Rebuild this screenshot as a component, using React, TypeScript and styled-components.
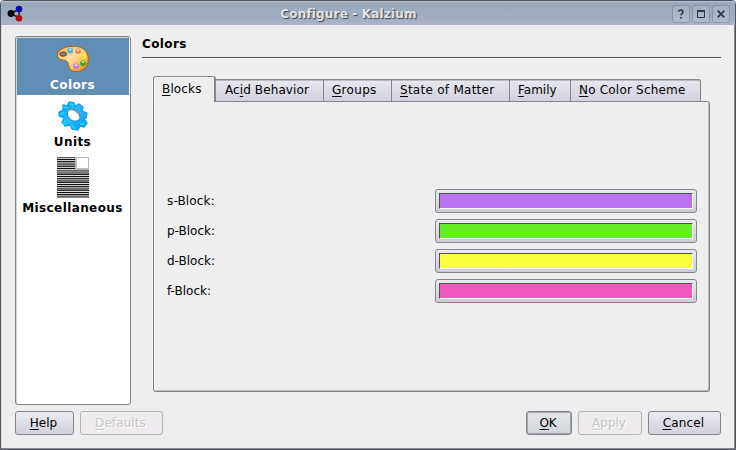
import React from "react";
import styled, { createGlobalStyle } from "styled-components";

const GlobalStyle = createGlobalStyle`
  * { box-sizing: border-box; }
  body { margin: 0; background: #fff; overflow: hidden; }
`;

const Window = styled.main`
  width: 736px;
  height: 450px;
  display: flex;
  flex-direction: column;
  overflow: hidden;
  background: #eeeeee;
  border: 1px solid #50545f;
  border-radius: 4px 4px 0 0;
  box-shadow: inset -1px -1px 0 #858990, inset 1px 0 0 #dcdcda;
  font: 12px/16px "DejaVu Sans", sans-serif;
  color: #000;
`;

const TitleBar = styled.header`
  height: 24px;
  flex: none;
  display: flex;
  align-items: center;
  padding: 1px 5px 0 6px;
  background: linear-gradient(#b9c2d1 0, #9ba8bc 2px, #9dabbe 9px, #a0aec0 17px, #acb5c7 24px);
`;

const Title = styled.h1`
  flex: 1;
  margin: 0;
  padding: 0 0 0 1px;
  text-align: center;
  font-size: 12px;
  line-height: 16px;
  letter-spacing: 0.17px;
  color: #e2e3e4;
  text-shadow: 1px 1px 1px #3f444d;
`;

const WindowButtons = styled.div`
  display: flex;
  gap: 2px;
`;

const WindowButton = styled.button`
  width: 18px;
  height: 18px;
  padding: 0;
  display: grid;
  place-items: center;
  border: 1px solid #8b95a5;
  border-radius: 3px;
  background: linear-gradient(#a6b0c1, #b0bacb);
  svg { display: block; }
`;

const Body = styled.div`
  display: flex;
  height: 369px;
  margin: 11px 14px 0;
  gap: 11px;
`;

const Sidebar = styled.nav`
  width: 116px;
  padding: 1px;
  flex: none;
  border: 1px solid #838383;
  border-radius: 3px;
  background: #fff;
  box-shadow: inset 1px 1px 0 #d4d4d4;
`;

const SideItem = styled.div<{ $height: number; $selected?: boolean; $icon: number }>`
  height: ${(p) => p.$height}px;
  padding-top: 3px;
  padding-right: 1px;
  display: grid;
  grid-template-rows: ${(p) => p.$icon}px 16px;
  align-content: start;
  justify-items: center;
  align-items: center;
  font-weight: bold;
  color: ${(p) => (p.$selected ? "#fff" : "#000")};
  background: ${(p) => (p.$selected ? "#628db5" : "transparent")};
  svg { display: block; }
`;

const Label = styled.span<{ $track?: number }>`
  white-space: nowrap;
  letter-spacing: ${(p) => p.$track ?? 0}px;
`;

const Key = styled.span`
  text-decoration: underline;
  text-decoration-thickness: 1px;
  text-underline-offset: 2px;
  text-decoration-skip-ink: none;
`;

const Page = styled.section`
  flex: 1;
  min-width: 0;
`;

const Heading = styled.h2`
  height: 22px;
  margin: 0 0 18px;
  border-bottom: 1px solid #4c4c4c;
  box-shadow: 0 1px 0 #f8f8f8;
  font-size: 12px;
  line-height: 17px;
`;

const TabArea = styled.div`
  width: 557px;
  margin-left: 11px;
`;

const Tabs = styled.div`
  display: flex;
  align-items: flex-start;
  height: 25px;
`;

const Tab = styled.div<{ $width: number; $pad: number; $active?: boolean; $last?: boolean }>`
  width: ${(p) => p.$width}px;
  height: ${(p) => (p.$active ? 26 : 23)}px;
  margin-top: ${(p) => (p.$active ? 0 : 3)}px;
  padding: ${(p) => (p.$active ? 4 : 2)}px 0 0 ${(p) => p.$pad}px;
  flex: none;
  border: 1px solid #85858a;
  border-width: ${(p) => (p.$active ? "1px 2px 0 1px" : "1px 1px 1px 0")};
  border-radius: ${(p) => (p.$active ? "3px 3px 0 0" : p.$last ? "0 3px 0 0" : "0")};
  background: ${(p) => (p.$active ? "#eeeeee" : "linear-gradient(#e8e8f0, #d1d0dc)")};
  box-shadow: ${(p) => (p.$active ? "inset 1px 1px 0 #fafafa" : "inset 0 1px 0 #b9b9c0")};
`;

const Panel = styled.div`
  height: 291px;
  padding: 88px 12px 0 13px;
  border: 1px solid #838383;
  border-top: 0;
  border-radius: 0 3px 3px 3px;
  box-shadow: inset 1px 0 0 #fafafa, inset -1px -1px 0 #bbb;
  background: linear-gradient(#838383, #838383) right 1px top 0 / 493px 1px no-repeat;
`;

const ColorRow = styled.div`
  display: flex;
  justify-content: space-between;
  align-items: center;
  height: 24px;
  margin-bottom: 6px;
`;

const ColorButton = styled.button`
  width: 262px;
  height: 24px;
  padding: 3px;
  border: 1px solid #85858e;
  border-radius: 3px;
  background: linear-gradient(#e9e9ef, #cdcdd8);
`;

const Swatch = styled.span<{ $color: string }>`
  display: block;
  height: 16px;
  border: 1px solid;
  border-color: #505050 #fff #fff #505050;
  background: ${(p) => p.$color};
`;

const Footer = styled.footer`
  display: flex;
  margin: 6px 14px 0;
`;

const Button = styled.button<{ $width: number; $gap?: string; $primary?: boolean }>`
  width: ${(p) => p.$width}px;
  height: 24px;
  margin: 0 0 0 ${(p) => p.$gap ?? "0"};
  padding: 0 2px 1px 0;
  border: 1px solid #85858f;
  border-radius: 3px;
  background: ${(p) => (p.$primary ? "linear-gradient(#e6e8ec, #d1d4da)" : "linear-gradient(#eaeaf1, #d2d1dc)")};
  box-shadow: ${(p) => (p.$primary ? "inset 0 0 0 1px #a5a6ab" : "none")};
  font: inherit;
  color: #000;
  &:disabled {
    border-color: #b5b5b5;
    background: linear-gradient(#eeeeee, #eee9ee);
    color: #c6c6c8;
    text-shadow: 1px 1px 0 #fff;
  }
`;

const Molecule = () => (
  <svg width="17" height="17" viewBox="0 0 17 17">
    <path d="M4 8.5 12 4V13Z" fill="none" stroke="#15171a" strokeWidth="1.5" />
    <circle cx="4" cy="8.5" r="3.4" fill="#080808" />
    <circle cx="12" cy="4" r="3.3" fill="#0808b8" />
    <circle cx="12" cy="13.3" r="3.3" fill="#b50808" />
  </svg>
);

const Palette = () => (
  <svg width="34" height="28" viewBox="0 0 34 28">
    <defs>
      <linearGradient id="wood" x1="0" y1="0" x2="1" y2="1">
        <stop offset="0" stopColor="#ffad32" />
        <stop offset=".45" stopColor="#ffe2a3" />
        <stop offset="1" stopColor="#ed8500" />
      </linearGradient>
    </defs>
    <path d="M1.5 10C1.5 5 8 1.4 17 1.2C26 1 32.5 6 32.3 14.5C32.2 22 27 26.8 20 26.5C14 26.3 13 23 12.5 19.5C11.9 16 10 15.4 6.5 15C3 14.5 1.5 12.5 1.5 10Z" fill="url(#wood)" stroke="#ad6217" strokeWidth="1" />
    <ellipse cx="7.1" cy="9.1" rx="3.2" ry="2" fill="#628db5" stroke="#8b4914" strokeWidth="1.2" />
    <circle cx="14.2" cy="5.7" r="2.9" fill="#42b4ee" />
    <circle cx="22" cy="6.2" r="2.9" fill="#f38b4d" />
    <circle cx="28" cy="11.3" r="2.8" fill="#ffda27" />
    <circle cx="27" cy="18.3" r="2.8" fill="#38ad12" />
    <circle cx="20.2" cy="21.3" r="2.9" fill="#bf79df" />
    <g fill="#fff" opacity=".65">
      <ellipse cx="14.2" cy="4.4" rx="1.6" ry="1" />
      <ellipse cx="22" cy="5" rx="1.6" ry="1" />
      <ellipse cx="28" cy="10" rx="1.6" ry="1" />
      <ellipse cx="27" cy="17" rx="1.6" ry="1" />
      <ellipse cx="20.2" cy="20.2" rx="1.6" ry="1" />
    </g>
  </svg>
);

const Gear = () => (
  <svg width="30" height="30" viewBox="0 0 30 30">
    <defs>
      <linearGradient id="gear" x1="0" y1="0" x2="1" y2="1">
        <stop offset="0" stopColor="#0798ed" />
        <stop offset=".5" stopColor="#2abbff" />
        <stop offset="1" stopColor="#009bea" />
      </linearGradient>
    </defs>
    <path fillRule="evenodd" d="M5 4L9 5L11 1L16 2L17 5L21 3L25 6L24 10L29 12L28 17L26 18L29 22L26 26L22 25L20 29L14 28L12 24L7 25L4 21L6 17L1 15L1 11L5 9Z M10 9C8 13 10 18 15 20C20 21 23 19 22 15C20 9 14 6 10 9Z" fill="url(#gear)" stroke="#139ee8" strokeWidth="1.3" strokeLinejoin="round" />
    <path d="M10 10C13 6 21 10 22 16" fill="none" stroke="#7999b0" strokeWidth="1.8" />
    <path d="M6 6L9 7M12 3L15 4M5 12L3 13M7 20L6 23M14 25L16 27M23 23L26 23" stroke="#17d9ff" strokeWidth="2" strokeLinecap="round" />
  </svg>
);

/* Grey level of each one-pixel text line of the page icon, top to bottom. */
const lineShades = [
  "#555", "#ccc", "#111", "#ccc", "#222", "#999", "#777", "#666", "#888", "#333", "#ccc",
  "#111", "#ccc", "#666", "#888", "#777", "#777", "#222", "#ddd", "#111", "#ccc",
  "#333", "#999", "#666", "#777", "#222", "#ddd", "#111", "#ccc", "#222", "#aaa",
  "#666", "#777", "#333", "#ddd", "#111", "#ccc", "#222", "#999", "#666", "#888",
];
const Document = () => (
  <svg width="32" height="41" viewBox="0 0 32 41" shapeRendering="crispEdges">
    {lineShades.map((shade, i) => (
      <rect key={i} y={i} width="32" height="1" fill={shade} />
    ))}
    <rect x="18" width="14" height="13" fill="#bdb8bd" />
    <rect x="20" y="1" width="11" height="10" fill="#fff" />
  </svg>
);

type TabSpec = { key: string; before?: string; after: string; width: number; pad: number; track: number };
const tabs: TabSpec[] = [
  { key: "B", after: "locks", width: 63, pad: 8, track: 0.15 },
  { before: "Ac", key: "i", after: "d Behavior", width: 108, pad: 9, track: 0.1 },
  { key: "G", after: "roups", width: 68, pad: 8, track: 0.3 },
  { key: "S", after: "tate of Matter", width: 118, pad: 8, track: 0.27 },
  { key: "F", after: "amily", width: 61, pad: 8, track: 0 },
  { key: "N", after: "o Color Scheme", width: 130, pad: 8, track: 0.2 },
];

const blocks = [
  { name: "s-Block:", color: "#bb72ef", track: 0.15 },
  { name: "p-Block:", color: "#63ef22", track: 0 },
  { name: "d-Block:", color: "#f7ff3e", track: 0 },
  { name: "f-Block:", color: "#f058bd", track: 0 },
];

export default function App() {
  return (
    <>
      <GlobalStyle />
      <Window>
        <TitleBar>
          <Molecule />
          <Title>Configure - Kalzium</Title>
          <WindowButtons>
            <WindowButton aria-label="Help">
              <svg width="8" height="10" viewBox="0 0 8 10"><path d="M1.5 2.5C2 .5 6 .5 6 3C6 4.5 4 4.5 4 6.3M4 8V9.5" fill="none" stroke="#333941" strokeWidth="1.7" /></svg>
            </WindowButton>
            <WindowButton aria-label="Maximize">
              <svg width="8" height="8" viewBox="0 0 8 8"><path d="M.5 1H7.5V7.5H.5Z" fill="none" stroke="#333941" /><path d="M0 1H8" stroke="#333941" strokeWidth="2" /></svg>
            </WindowButton>
            <WindowButton aria-label="Close">
              <svg width="8" height="8" viewBox="0 0 8 8"><path d="M.7.7L7.3 7.3M7.3.7L.7 7.3" stroke="#333941" strokeWidth="1.8" /></svg>
            </WindowButton>
          </WindowButtons>
        </TitleBar>
        <Body>
          <Sidebar>
            <SideItem $height={57} $icon={36} $selected><Palette /><Label $track={0.4}>Colors</Label></SideItem>
            <SideItem $height={57} $icon={36}><Gear /><Label $track={0.4}>Units</Label></SideItem>
            <SideItem $height={66} $icon={45}><Document /><Label $track={0.4}>Miscellaneous</Label></SideItem>
          </Sidebar>
          <Page>
            <Heading><Label $track={0.4}>Colors</Label></Heading>
            <TabArea>
              <Tabs>
                {tabs.map((t, i) => (
                  <Tab key={t.key} $width={t.width} $pad={t.pad} $active={i === 0} $last={i === tabs.length - 1}>
                    <Label $track={t.track}>{t.before}<Key>{t.key}</Key>{t.after}</Label>
                  </Tab>
                ))}
              </Tabs>
              <Panel>
                {blocks.map((b) => (
                  <ColorRow key={b.name}>
                    <Label $track={b.track}>{b.name}</Label>
                    <ColorButton aria-label={b.name}><Swatch $color={b.color} /></ColorButton>
                  </ColorRow>
                ))}
              </Panel>
            </TabArea>
          </Page>
        </Body>
        <Footer>
          <Button $width={59}><Label><Key>H</Key>elp</Label></Button>
          <Button $width={83} $gap="6px" disabled><Label $track={0.1}><Key>D</Key>efaults</Label></Button>
          <Button $width={46} $gap="auto" $primary><Label $track={-0.2}><Key>O</Key>K</Label></Button>
          <Button $width={64} $gap="6px" disabled><Label><Key>A</Key>pply</Label></Button>
          <Button $width={73} $gap="6px"><Label $track={0.15}><Key>C</Key>ancel</Label></Button>
        </Footer>
      </Window>
    </>
  );
}
